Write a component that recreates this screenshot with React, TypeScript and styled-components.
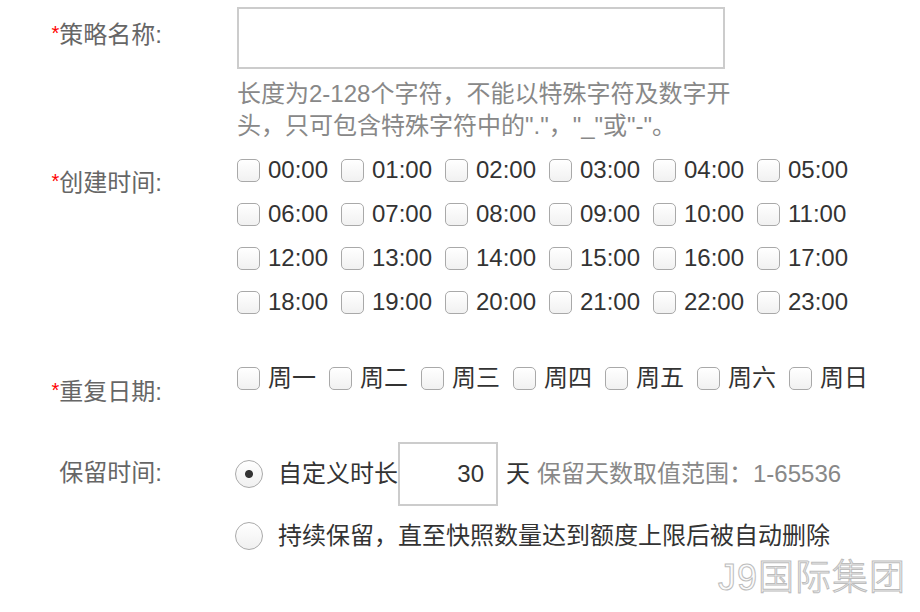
import React from "react";
import styled, { createGlobalStyle } from "styled-components";

const GlobalStyle = createGlobalStyle`
  html, body {
    margin: 0;
    padding: 0;
    background: #fff;
  }
  body {
    font-family: "Liberation Sans", "Noto Sans CJK SC", sans-serif;
    width: 920px;
    height: 612px;
    overflow: hidden;
  }
`;

const Page = styled.div`
  position: relative;
  width: 920px;
  height: 612px;
  padding-top: 7px;
  box-sizing: border-box;
`;

const FormRow = styled.div<{ $gap?: number }>`
  display: flex;
  align-items: flex-start;
  margin-top: ${p => p.$gap ?? 0}px;
`;

const Label = styled.div<{ $offset: number }>`
  width: 162px;
  flex: none;
  padding-top: ${p => p.$offset}px;
  text-align: right;
  font-size: 24px;
  line-height: 32px;
  color: #666;
  margin-right: 75px;
  white-space: nowrap;
`;

const Star = styled.span`
  color: #f00;
  font-size: 20px;
  vertical-align: 3px;
`;

const Field = styled.div`
  display: flex;
  flex-direction: column;
`;

const NameInput = styled.input`
  width: 488px;
  height: 62px;
  box-sizing: border-box;
  border: 2px solid #ccc;
  outline: none;
  padding: 0 10px;
  font-size: 24px;
  font-family: inherit;
`;

const Hint = styled.div`
  width: 500px;
  margin-top: 9px;
  font-size: 24px;
  line-height: 32px;
  color: #888;
`;

const CheckGrid = styled.div<{ $col: number; $count: number }>`
  display: grid;
  grid-template-columns: repeat(${p => p.$count}, ${p => p.$col}px);
  grid-auto-rows: 44px;
`;

const CheckItem = styled.label`
  display: flex;
  align-items: center;
  gap: 8px;
  font-size: 24px;
  line-height: 24px;
  color: #333;
  white-space: nowrap;
`;

const Box = styled.input`
  appearance: none;
  margin: 0;
  width: 23px;
  height: 23px;
  box-sizing: border-box;
  border: 1px solid #a9a9a9;
  border-radius: 5px;
  background: linear-gradient(#fff, #f1f1f1);
  box-shadow: inset 0 1px 0 #fff;
`;

const Option = styled.label<{ $gap?: number }>`
  display: flex;
  align-items: center;
  min-height: 44px;
  margin-top: ${p => p.$gap ?? 0}px;
  font-size: 24px;
  line-height: 24px;
  color: #333;
  white-space: nowrap;
`;

const Radio = styled.input`
  appearance: none;
  margin: 0 15px 0 -2px;
  width: 28px;
  height: 28px;
  box-sizing: border-box;
  border: 1px solid #aaa;
  border-radius: 50%;
  background: linear-gradient(#fff, #f0f0f0);
  &:checked {
    background: radial-gradient(circle, #333 0 3.5px, transparent 4.5px),
      linear-gradient(#fff, #f0f0f0);
  }
`;

const DaysInput = styled.input`
  width: 100px;
  height: 64px;
  box-sizing: border-box;
  border: 2px solid #ccc;
  outline: none;
  padding: 0 12px 0 0;
  text-align: right;
  font-size: 24px;
  font-family: inherit;
  color: #333;
`;

const Unit = styled.span`
  margin-left: 8px;
  color: #333;
`;

const Range = styled.span`
  margin-left: 7px;
  color: #888;
`;

const Watermark = styled.div`
  position: absolute;
  right: 14px;
  bottom: 12px;
  font-size: 36px;
  letter-spacing: 1px;
  color: #fbfbfb;
  -webkit-text-stroke: 1px #bdbdbd;
  font-weight: 300;
`;

const hours = Array.from({ length: 24 }, (_, i) => `${String(i).padStart(2, "0")}:00`);
const days = ["周一", "周二", "周三", "周四", "周五", "周六", "周日"];

const App = () => (
  <Page>
    <GlobalStyle />
    <FormRow>
      <Label $offset={10}>
        <Star>*</Star>策略名称:
      </Label>
      <Field>
        <NameInput />
        <Hint>长度为2-128个字符，不能以特殊字符及数字开头，只可包含特殊字符中的"."，"_"或"-"。</Hint>
      </Field>
    </FormRow>

    <FormRow $gap={6}>
      <Label $offset={17}>
        <Star>*</Star>创建时间:
      </Label>
      <CheckGrid $col={104} $count={6}>
        {hours.map(h => (
          <CheckItem key={h}>
            <Box type="checkbox" />
            {h}
          </CheckItem>
        ))}
      </CheckGrid>
    </FormRow>

    <FormRow $gap={32}>
      <Label $offset={18}>
        <Star>*</Star>重复日期:
      </Label>
      <CheckGrid $col={92} $count={7}>
        {days.map(d => (
          <CheckItem key={d}>
            <Box type="checkbox" />
            {d}
          </CheckItem>
        ))}
      </CheckGrid>
    </FormRow>

    <FormRow $gap={34}>
      <Label $offset={15}>保留时间:</Label>
      <Field>
        <Option>
          <Radio type="radio" name="keep" defaultChecked />
          自定义时长
          <DaysInput defaultValue="30" />
          <Unit>天</Unit>
          <Range>保留天数取值范围：1-65536</Range>
        </Option>
        <Option $gap={8}>
          <Radio type="radio" name="keep" />
          持续保留，直至快照数量达到额度上限后被自动删除
        </Option>
      </Field>
    </FormRow>

    <Watermark>J9国际集团</Watermark>
  </Page>
);

export default App;
